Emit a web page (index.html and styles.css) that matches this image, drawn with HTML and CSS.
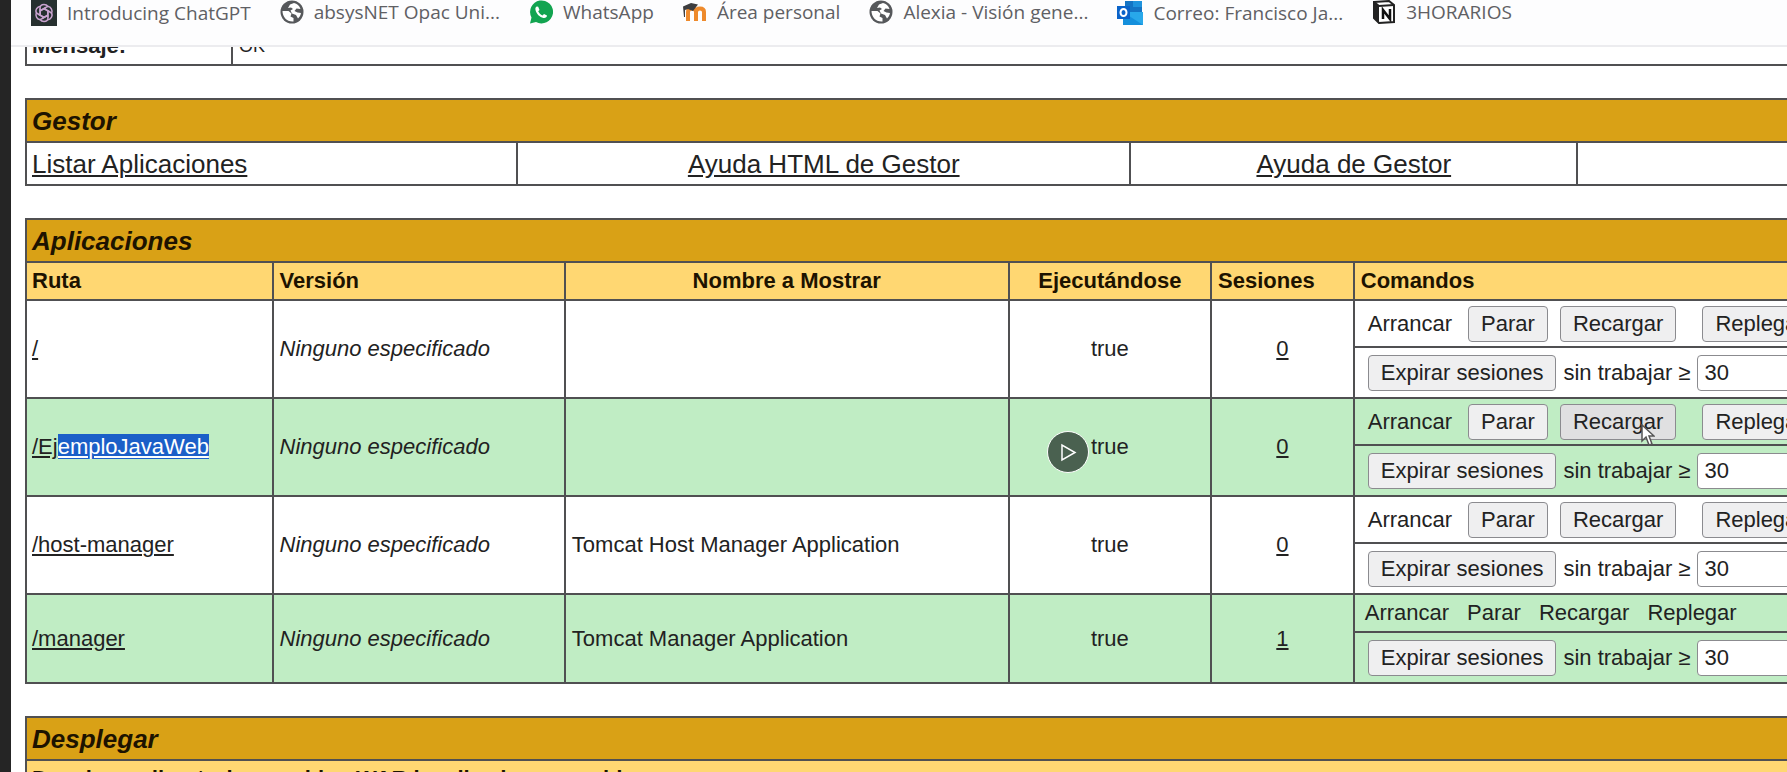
FILE: index.html
```html
<!DOCTYPE html>
<html lang="es">
<head>
<meta charset="utf-8">
<title>Gestor de Aplicaciones Web de Tomcat</title>
<link rel="stylesheet" href="styles.css">
</head>
<body>
<div class="edge"></div>
<div class="window">
  <nav class="bookmarks">
    <a href="#"><svg class="icon gpt" viewBox="0 0 26 26"><rect width="26" height="26" fill="#26302f"/><g fill="none" stroke="#c9a3cf" stroke-width="1.5"><path id="petal" d="M9 15.500V8.500q0-4 4-4 2.500 0 4 2M9 11l6-3.500"/><use href="#petal" transform="rotate(60 13 13)"/><use href="#petal" transform="rotate(120 13 13)"/><use href="#petal" transform="rotate(180 13 13)"/><use href="#petal" transform="rotate(240 13 13)"/><use href="#petal" transform="rotate(300 13 13)"/></g></svg><span>Introducing ChatGPT</span></a>
    <a href="#"><svg class="icon" viewBox="0 0 24 24"><circle cx="12" cy="12" r="11.500" fill="#56585b"/><path d="M2.500 11h6l3 2.500-1 3 3 1.500v3.500C7 22 2.500 17 2.500 11zM14 3c3 .5 5.500 3 6.500 6l-4-.5-2 2.500 3 1.500 3.500.5c-.5 2.500-1.500 4-3 5.500l-2-3.500-4-1.500-1.500-3L13 9l-2-1.500-3 .5 2-3.500z" fill="#fff"/></svg><span>absysNET Opac Uni...</span></a>
    <a href="#"><svg class="icon" viewBox="0 0 24 24"><path d="M1 23.500l1.500-6A11.500 11.500 0 1 1 7 22z" fill="#12a450"/><path d="M8 6.500c-1 0-2 1.500-1.500 3.500 1 4 4 7 8 8 2 .3 3.500-1 3.500-2.500l-3-1.600-1.500 1.600c-2-.8-3.500-2.300-4.300-4.200L10.500 10 9.200 6.800z" fill="#fff"/></svg><span>WhatsApp</span></a>
    <a href="#"><svg class="icon" viewBox="0 0 24 24"><path d="M5 21v-9q0-3.500 4-3.500t4 3.500v9m0-9q0-3.500 4-3.500t4 3.500v9" fill="none" stroke="#ee8a2c" stroke-width="4"/><path d="M0 6.500L8 3l7 1.500-5 6.500-5-2-3 1v7H1z" fill="#3d3d3f"/></svg><span>Área personal</span></a>
    <a href="#"><svg class="icon" viewBox="0 0 24 24"><circle cx="12" cy="12" r="11.500" fill="#56585b"/><path d="M2.500 11h6l3 2.500-1 3 3 1.500v3.500C7 22 2.500 17 2.500 11zM14 3c3 .5 5.500 3 6.500 6l-4-.5-2 2.500 3 1.500 3.500.5c-.5 2.500-1.500 4-3 5.500l-2-3.500-4-1.500-1.500-3L13 9l-2-1.500-3 .5 2-3.500z" fill="#fff"/></svg><span>Alexia - Visión gene...</span></a>
    <a href="#"><svg class="icon outlook" viewBox="0 0 26 26"><path d="M8 1h17v12H8z" fill="#1474c4"/><path d="M16 1h9v6h-9z" fill="#1f93dd"/><path d="M6 12h20v13H6z" fill="#28a8ea"/><path d="M6 12l20 13H6z" fill="#148fdc"/><rect y="6" width="13" height="13" fill="#0a63c9"/><ellipse cx="6.500" cy="12.500" rx="3" ry="3.500" fill="none" stroke="#fff" stroke-width="2"/></svg><span>Correo: Francisco Ja...</span></a>
    <a href="#"><svg class="icon" viewBox="0 0 24 24"><path d="M2 2l15-1 5 4v17l-15 1-5-5z" fill="#fff" stroke="#222" stroke-width="2"/><path d="M2 2l5 4v17l-5-5z" fill="#222"/><path d="M2 2l5 4 15-1" fill="none" stroke="#222" stroke-width="2"/><path d="M11 19V10l7 9V9" fill="none" stroke="#111" stroke-width="2.500"/></svg><span>3HORARIOS</span></a>
  </nav>
  <main class="page">
    <table class="message">
      <colgroup><col class="label"><col></colgroup>
      <tr><th>Mensaje:</th><td>OK</td></tr>
    </table>
    <table class="links">
      <colgroup><col class="list"><col class="html-help"><col class="help"><col></colgroup>
      <tr><th class="title" colspan="4">Gestor</th></tr>
      <tr><td><a href="#">Listar Aplicaciones</a></td><td class="center"><a href="#">Ayuda HTML de Gestor</a></td><td class="center"><a href="#">Ayuda de Gestor</a></td><td></td></tr>
    </table>
    <table class="apps">
      <colgroup><col class="path"><col class="version"><col class="name"><col class="running"><col class="sessions"><col></colgroup>
      <tr><th class="title" colspan="6">Aplicaciones</th></tr>
      <tr class="head"><th>Ruta</th><th>Versión</th><th class="center">Nombre a Mostrar</th><th class="center">Ejecutándose</th><th>Sesiones</th><th>Comandos</th></tr>
      <tr>
        <td rowspan="2"><a href="#">/</a></td><td rowspan="2"><i>Ninguno especificado</i></td><td rowspan="2"></td><td rowspan="2" class="center">true</td><td rowspan="2" class="center"><a href="#">0</a></td>
        <td class="commands"><div class="row"><span class="start">Arrancar</span><button>Parar</button><button>Recargar</button><button class="undeploy">Replegar</button></div></td>
      </tr>
      <tr><td class="expire"><div class="row"><button>Expirar sesiones</button><label for="idle1">sin trabajar ≥</label><input id="idle1" type="text" value="30"></div></td></tr>
      <tr class="alt">
        <td rowspan="2"><a href="#">/Ej<span class="selected">emploJavaWeb</span></a></td><td rowspan="2"><i>Ninguno especificado</i></td><td rowspan="2"></td><td rowspan="2" class="center">true</td><td rowspan="2" class="center"><a href="#">0</a></td>
        <td class="commands"><div class="row"><span class="start">Arrancar</span><button>Parar</button><button class="hover">Recargar<svg class="cursor" viewBox="0 0 14 22"><path d="M1 1v16l4-4 3 8 3-1-3-8h5z" fill="#fff" stroke="#555" stroke-width="1.500"/></svg></button><button class="undeploy">Replegar</button></div></td>
      </tr>
      <tr class="alt"><td class="expire"><div class="row"><button>Expirar sesiones</button><label for="idle2">sin trabajar ≥</label><input id="idle2" type="text" value="30"></div></td></tr>
      <tr>
        <td rowspan="2"><a href="#">/host-manager</a></td><td rowspan="2"><i>Ninguno especificado</i></td><td rowspan="2">Tomcat Host Manager Application</td><td rowspan="2" class="center">true</td><td rowspan="2" class="center"><a href="#">0</a></td>
        <td class="commands"><div class="row"><span class="start">Arrancar</span><button>Parar</button><button>Recargar</button><button class="undeploy">Replegar</button></div></td>
      </tr>
      <tr><td class="expire"><div class="row"><button>Expirar sesiones</button><label for="idle3">sin trabajar ≥</label><input id="idle3" type="text" value="30"></div></td></tr>
      <tr class="alt">
        <td rowspan="2"><a href="#">/manager</a></td><td rowspan="2"><i>Ninguno especificado</i></td><td rowspan="2">Tomcat Manager Application</td><td rowspan="2" class="center">true</td><td rowspan="2" class="center"><a href="#">1</a></td>
        <td class="plain"><div class="words"><span>Arrancar</span><span>Parar</span><span>Recargar</span><span>Replegar</span></div></td>
      </tr>
      <tr class="alt"><td class="expire"><div class="row"><button>Expirar sesiones</button><label for="idle4">sin trabajar ≥</label><input id="idle4" type="text" value="30"></div></td></tr>
    </table>
    <table class="deploy">
      <tr><th class="title">Desplegar</th></tr>
      <tr class="head"><th>Desplegar directorio o archivo WAR localizado en servidor</th></tr>
    </table>
  </main>
</div>
<button class="play" aria-label="Reproducir"><svg viewBox="0 0 40 40"><path d="M14 13v15l13-7.500z" fill="none" stroke="#fff" stroke-width="1.500"/></svg></button>
</body>
</html>
```
FILE: styles.css
```css
* { box-sizing: border-box; }

body {
  margin: 0;
  height: 100vh;
  display: flex;
  overflow: hidden;
  background: #fff;
  color: #222;
  font: 22px/26px "Liberation Sans", Arial, sans-serif;
}

.edge { flex: 0 0 11px; background: #252525; }

.window {
  flex: 1;
  min-width: 0;
  display: flex;
  flex-direction: column;
  overflow: hidden;
}

.bookmarks {
  flex: 0 0 47px;
  display: flex;
  align-items: flex-start;
  gap: 29px;
  padding-left: 20px;
  border-bottom: 2px solid #ececef;
  background: #fdfdfe;
  white-space: nowrap;
}

.bookmarks a {
  display: flex;
  align-items: center;
  gap: 10px;
  color: #5f6064;
  font: 19px/24px "Open Sans", sans-serif;
  text-decoration: none;
}

.icon { width: 24px; height: 24px; }
.gpt, .outlook { width: 26px; height: 26px; }

.page {
  flex: 1;
  min-height: 0;
  padding-left: 14px;
  overflow: hidden;
}

table {
  width: 100%;
  margin-bottom: 32px;
  table-layout: fixed;
  border-collapse: collapse;
}

th, td {
  height: 38px;
  padding: 0 6px;
  border: 2px solid #505052;
  text-align: left;
  white-space: nowrap;
}

th:first-child, td:first-child { padding-left: 5px; }
th:last-child, td:last-child { border-right: 0; }

th { color: #1d1300; }
a { color: #222; text-underline-offset: 2px; }
.center { text-align: center; }

.message { margin-top: -21px; }
.message th { color: #222; }
.message td { font-size: 18px; }
.label { width: 11.7%; }

.title {
  height: 43px;
  background: #d9a116;
  font-size: 26px;
  font-style: italic;
}

.head th { background: #ffd772; }

.links td { height: 43px; font-size: 26px; }
.list { width: 27.9%; }
.html-help { width: 34.8%; }
.help { width: 25.4%; }

.path { width: 14%; }
.version { width: 16.6%; }
.name { width: 25.2%; }
.running { width: 11.5%; }
.sessions { width: 8.1%; }

.alt td { background: #c0edc4; }

.apps .commands { height: 47px; }
.apps .expire { height: 51px; }
.apps .commands, .apps .expire { padding: 0 13px; }
.apps .plain { padding: 0 10px; }

.row { display: flex; align-items: center; gap: 7px; }
.commands .row { gap: 12px; }
.start { margin-right: 4px; }
.undeploy { margin-left: 14px; }
.words { display: flex; gap: 18px; }

button, input {
  height: 36px;
  border: 1px solid #8b8b8f;
  border-radius: 4px;
  color: #222;
  font: inherit;
}

button { flex: none; padding: 0 12px; background: #efeff0; }
.hover { position: relative; background: #e0e0e1; }
input { width: 120px; flex: none; padding: 0 6px; background: #fff; }

.selected {
  background: #1b5fc8;
  color: #fff;
  text-decoration: underline;
}

.cursor {
  position: absolute;
  right: 20px;
  bottom: -7px;
  width: 14px;
  height: 22px;
}

.play {
  position: absolute;
  left: 1047px;
  top: 431px;
  width: 42px;
  height: 42px;
  padding: 0;
  border: 1px solid #fff;
  border-radius: 50%;
  background: #4a6150;
}
```
